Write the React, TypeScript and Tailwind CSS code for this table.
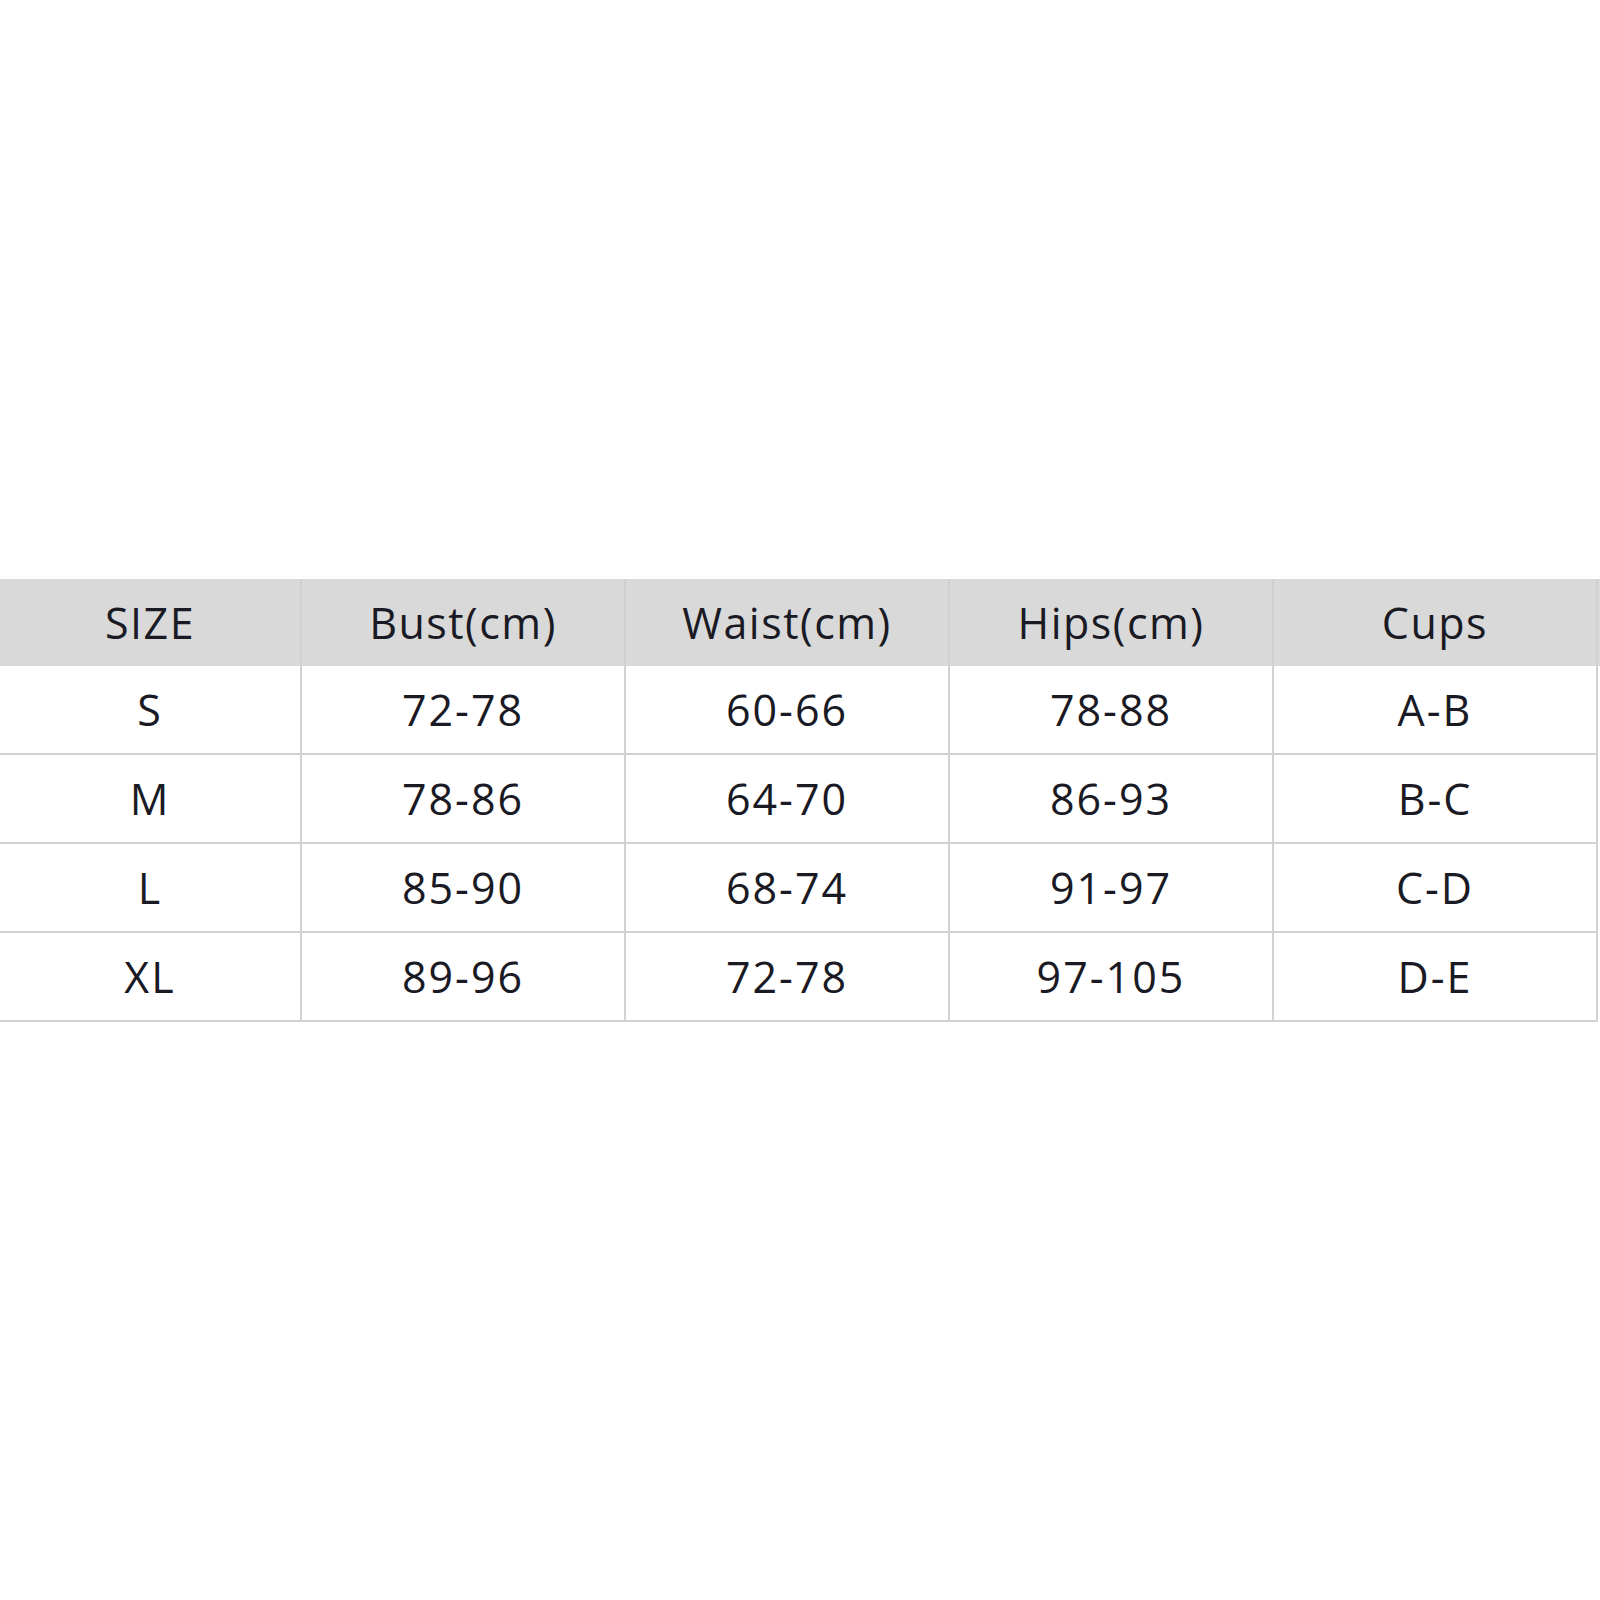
import React from "react";

const headers = ["SIZE", "Bust(cm)", "Waist(cm)", "Hips(cm)", "Cups"];

const rows = [
  ["S", "72-78", "60-66", "78-88", "A-B"],
  ["M", "78-86", "64-70", "86-93", "B-C"],
  ["L", "85-90", "68-74", "91-97", "C-D"],
  ["XL", "89-96", "72-78", "97-105", "D-E"],
];

const cols = "grid grid-cols-[302px_324px_324px_324px_324px]";

export default function App() {
  return (
    <div
      className="w-[1600px] h-[1600px] bg-white pt-[579px] text-[#1a1a24]"
      style={{ fontFamily: '"Open Sans", "Noto Sans", sans-serif' }}
    >
      <div className={`${cols} h-[87px] bg-[#d9d9d9]`}>
        {headers.map((h) => (
          <div
            key={h}
            className="flex items-center justify-center border-r-2 border-[#d0d0d0] text-[43px] font-medium tracking-[1.5px] leading-none"
          >
            {h}
          </div>
        ))}
      </div>
      {rows.map((row) => (
        <div key={row[0]} className={`${cols} h-[89px]`}>
          {row.map((cell, i) => (
            <div
              key={`${row[0]}-${i}`}
              className="flex items-center justify-center border-r-2 border-b-2 border-[#d2d2d2] text-[43px] font-medium tracking-[2px] leading-none"
            >
              {cell}
            </div>
          ))}
        </div>
      ))}
    </div>
  );
}
